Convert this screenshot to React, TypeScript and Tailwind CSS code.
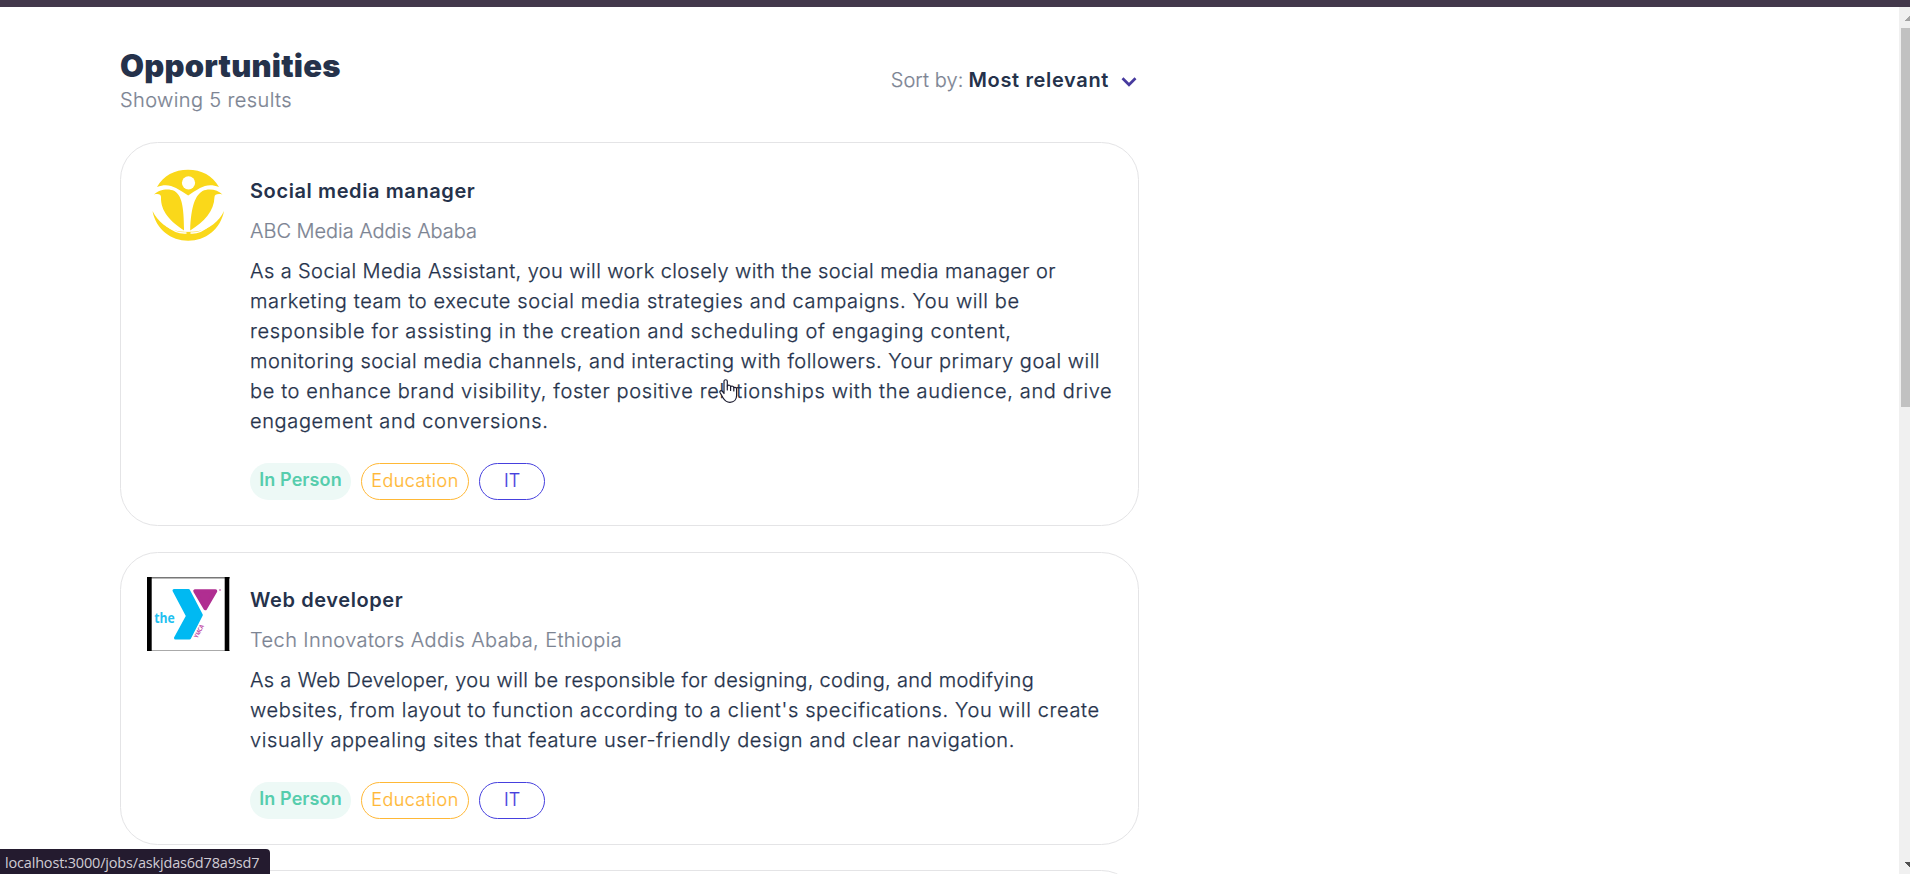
import type { ReactNode } from "react";

type Line = { text: string; tracking: string };

type Job = {
  id: string;
  title: string;
  company: string;
  companyTracking: string;
  lines: Line[];
  logo: ReactNode;
  cardClass: string;
};

function AbcLogo() {
  return (
    <svg width="83" height="75" viewBox="0.5 0.5 83 75" fill="#fad81a">
      <path d="M10.5 19.5C17 8 28 2.2 41.5 2.2S66 8 72.500 19.500C65 16.500 59 17.500 53.500 20.500C49 23 45 25.500 41.700 28C38 25.500 34 23 29.500 20.500C24 17.500 18 16.500 10.500 19.500Z" />
      <circle cx="42" cy="15.300" r="6.600" fill="#fff" />
      <path d="M7.500 27C12 22 22 20.500 28 23.500C35 28 37.500 38 37.600 63C24 54 14 44 14.500 29.500C14.500 27 12 26 7.500 27Z" />
      <path d="M76 27C71.500 22 62 20.500 56 23.500C49 28 44.500 38 43.700 63C58 54 67.500 44 68 29.500C68 27 71 26 76 27Z" />
      <path d="M6 43.500C11 54 21 62 33 64C38 64.300 45 64.300 50 64C62 62 73 54 77.500 43.500C74 62 59 73.200 41.700 73.200S9.500 62 6 43.500Z" />
      <path d="M37.500 64L39 45L42.500 45L43.500 64Z" fill="#fff" />
      <path d="M20 58C27 64 35 66 40 65.500M63 58C56 64 49 66 44 65.500" stroke="#fff" strokeWidth="1.500" fill="none" />
    </svg>
  );
}

function YLogo() {
  return (
    <svg width="83" height="74" viewBox="0 0 83 74">
      <rect width="83" height="74" fill="#fff" />
      <rect y="0" width="83" height="1.500" fill="#777" />
      <rect y="73" width="83" height="1" fill="#aaa" />
      <rect width="4.700" height="74" fill="#000" />
      <rect x="77.700" width="4.600" height="74" fill="#000" />
      <path
        d="M27 13.500H41.500L54.300 38L42.500 61H28.500L40.500 39Z"
        fill="#00b9f2"
        stroke="#00b9f2"
        strokeWidth="3"
        strokeLinejoin="round"
      />
      <path
        d="M48 14H68.500L58.300 31.500Z"
        fill="#b02e91"
        stroke="#b02e91"
        strokeWidth="3.500"
        strokeLinejoin="round"
      />
      <circle cx="73" cy="13" r="1.100" fill="#d68cc6" />
      <text x="7.300" y="45.700" fontSize="14" fontWeight="700" fontFamily="Open Sans, sans-serif" textLength="20.500" lengthAdjust="spacingAndGlyphs" fill="#22c0f0">
        the
      </text>
      <text
        transform="translate(50.500 61.500) rotate(-62)"
        fontSize="6"
        fontWeight="700"
        fontFamily="Open Sans, sans-serif"
        textLength="14"
        lengthAdjust="spacingAndGlyphs"
        fill="#c04aa5"
      >
        YMCA
      </text>
    </svg>
  );
}

const jobs: Job[] = [
  {
    id: "social",
    title: "Social media manager",
    company: "ABC Media Addis Ababa",
    companyTracking: "tracking-[-0.03px]",
    logo: <AbcLogo />,
    cardClass: "mt-[27px] h-[384px] pt-[33px]",
    lines: [
      { text: "As a Social Media Assistant, you will work closely with the social media manager or", tracking: "tracking-[0.41px]" },
      { text: "marketing team to execute social media strategies and campaigns. You will be", tracking: "tracking-[0.61px]" },
      { text: "responsible for assisting in the creation and scheduling of engaging content,", tracking: "tracking-[0.68px]" },
      { text: "monitoring social media channels, and interacting with followers. Your primary goal will", tracking: "tracking-[0.5px]" },
      { text: "be to enhance brand visibility, foster positive relationships with the audience, and drive", tracking: "tracking-[0.63px]" },
      { text: "engagement and conversions.", tracking: "tracking-[0.63px]" },
    ],
  },
  {
    id: "web",
    title: "Web developer",
    company: "Tech Innovators Addis Ababa, Ethiopia",
    companyTracking: "tracking-[0.4px]",
    logo: <YLogo />,
    cardClass: "mt-[26px] h-[293px] pt-[32px]",
    lines: [
      { text: "As a Web Developer, you will be responsible for designing, coding, and modifying", tracking: "tracking-[0.32px]" },
      { text: "websites, from layout to function according to a client's specifications. You will create", tracking: "tracking-[0.64px]" },
      { text: "visually appealing sites that feature user-friendly design and clear navigation.", tracking: "tracking-[0.595px]" },
    ],
  },
];

function JobCard({ job }: { job: Job }) {
  return (
    <article
      className={`flex shrink-0 items-start rounded-[37.5px] border border-[#e4e4e6] pl-[26px] ${job.cardClass}`}
    >
      <div className="-mt-2 w-[83px] shrink-0">{job.logo}</div>
      <div className="ml-5 flex flex-col whitespace-nowrap text-[20px] leading-[30px]">
        <h2 className="font-semibold tracking-[0.6px]">{job.title}</h2>
        <p className={`mt-[10px] font-light text-[#7c8493] [-webkit-text-stroke:0.2px] ${job.companyTracking}`}>{job.company}</p>
        <div className="mt-[10px] font-light [-webkit-text-stroke:0.25px]">
          {job.lines.map((line) => (
            <p key={line.text} className={line.tracking}>
              {line.text}
            </p>
          ))}
        </div>
        <div className="mt-[27px] flex h-[37px] gap-[10px] text-[18px]">
          <span className="flex w-[101px] justify-center rounded-full bg-[#edf9f6] pt-[2px] font-semibold tracking-[0.1px] text-[#56cdad]">
            In Person
          </span>
          <span className="flex w-[108px] justify-center rounded-full border border-[#ffb836] pt-[2px] font-light tracking-[0.5px] text-[#ffb836] [-webkit-text-stroke:0.2px]">
            Education
          </span>
          <span className="flex w-[66px] justify-center rounded-full border border-[#4640de] pt-[2px] font-light text-[#4640de] [-webkit-text-stroke:0.2px]">
            IT
          </span>
        </div>
      </div>
    </article>
  );
}

function Scrollbar() {
  return (
    <div className="flex w-[11px] shrink-0 flex-col bg-[#f0f0f0]">
      <svg className="h-[21px] w-[11px] shrink-0" viewBox="0 0 11 21" fill="#a3a3a3" shapeRendering="crispEdges">
        <path d="M5 14L11 8V14Z" />
      </svg>
      <div className="ml-0.5 h-[379px] bg-[#c1c1c1]" />
      <svg className="mt-auto h-[17px] w-[11px] shrink-0" viewBox="0 0 11 17" fill="#505050" shapeRendering="crispEdges">
        <path d="M5 5H11V11Z" />
      </svg>
    </div>
  );
}

function HandCursor() {
  return (
    <svg
      className="pointer-events-none absolute left-[719px] top-[379px]"
      width="19"
      height="25"
      viewBox="0 0 19 25"
      fill="#fff"
      stroke="#1a1a2e"
      strokeWidth="1.200"
      strokeLinejoin="round"
      strokeLinecap="round"
    >
      <path d="M5 14.500V2.300C5 .2 8.300.2 8.300 2.300V7C9.500 5.600 11.600 6.200 11.600 7.600C12.800 6.600 14.800 7.200 14.800 8.600C16 8 17.600 8.500 17.600 10.300V16.500C17.600 20.500 15 23.300 10.900 23.300C7.500 23.300 5.500 21.500 4 18.800L1 13.500C.4 12 2 11.100 3.200 12.200Z" />
      <path d="M8.300 7V11M11.600 7.600V11.500M14.800 8.600V12" fill="none" />
    </svg>
  );
}

export default function App() {
  return (
    <div className="relative flex h-[874px] w-full flex-col overflow-hidden bg-white font-['Inter',sans-serif] text-[#25324b]">
      <div className="h-[7px] shrink-0 bg-[#43384b]" />
      <div className="flex min-h-0 flex-1">
        <main className="flex min-w-0 flex-1 flex-col overflow-hidden pl-[120px] pt-[38px]">
          <div className="flex w-[1019px] flex-col">
            <header className="flex h-[70px] shrink-0 items-center justify-between whitespace-nowrap text-[20px] leading-[30px]">
              <div>
                <h1 className="pt-px text-[31px] font-black leading-[39px] tracking-[0.2px]">Opportunities</h1>
                <p className="font-light tracking-[0.38px] text-[#7c8493] [-webkit-text-stroke:0.2px]">Showing 5 results</p>
              </div>
              <div className="flex items-center pr-[2px]">
                <span className="font-light tracking-[0.1px] text-[#7c8493] [-webkit-text-stroke:0.2px]">Sort by:</span>
                <span className="ml-[5px] font-semibold tracking-[0.65px]">Most relevant</span>
                <svg className="ml-3 mt-1" width="16" height="10" viewBox="0 0 16 10" fill="none" stroke="#473a9e" strokeWidth="2.700">
                  <path d="M1.500 1.300L8 7.800L14.500 1.300" />
                </svg>
              </div>
            </header>
            {jobs.map((job) => (
              <JobCard key={job.id} job={job} />
            ))}
            <div className="mt-[25px] h-[300px] shrink-0 rounded-[37.5px] border border-[#e4e4e6]" />
          </div>
        </main>
        <Scrollbar />
      </div>
      <HandCursor />
      <div className="absolute bottom-0 left-0 flex h-[25px] w-[270px] items-center whitespace-nowrap rounded-tr-[4px] bg-[#241b2f] pl-[5px] pt-[2px] font-['Open_Sans',sans-serif] text-[14.5px] tracking-[-0.18px] text-[#d0ccd4]">
        localhost:3000/jobs/askjdas6d78a9sd7
      </div>
    </div>
  );
}
